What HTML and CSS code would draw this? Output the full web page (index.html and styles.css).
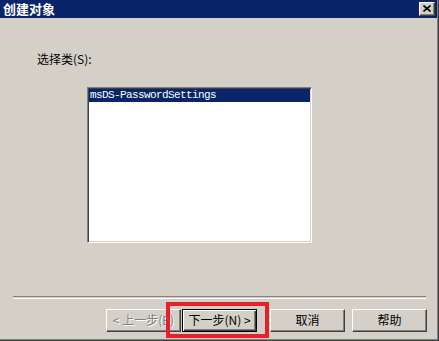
FILE: index.html
```html
<!DOCTYPE html>
<html lang="zh">
<head>
    <meta charset="UTF-8">
    <title>创建对象</title>
    <link rel="stylesheet" href="styles.css">
</head>
<body>
    <div class="frame">
        <div class="window">
            <!--标题栏-->
            <div class="title-bar">
                <span class="title-text">创建对象</span>
                <span class="close-btn">
                    <svg width="8" height="7" viewBox="0 0 8 7">
                        <path d="M0.5 0.5 L7.5 6.5 M7.5 0.5 L0.5 6.5" stroke="#000" stroke-width="1.6" fill="none"/>
                    </svg>
                </span>
            </div>

            <div class="content">
                <div class="label">选择类(S):</div>
                <div class="listbox">
                    <div class="list-item selected">msDS-PasswordSettings</div>
                </div>
            </div>

            <div class="separator"></div>

            <!--底部按钮-->
            <div class="buttons">
                <div class="btn disabled btn-back">&lt; 上一步(B)</div>
                <div class="btn default btn-next">下一步(N) &gt;</div>
                <div class="btn btn-cancel">取消</div>
                <div class="btn btn-help">帮助</div>
            </div>

            <div class="highlight"></div>
        </div>
    </div>
</body>
</html>
```

FILE: styles.css
```css
body {
    margin: 0;
    background: #d4d0c8;
    font-family: "Noto Sans CJK SC", "Liberation Sans", sans-serif;
    font-size: 12px;
    color: #000;
}

.frame {
    box-sizing: border-box;
    width: 439px;
    height: 341px;
    border-right: 1px solid #404040;
    border-bottom: 1px solid #404040;
}

.window {
    box-sizing: border-box;
    position: relative; /*红框相对于窗口定位*/
    width: 438px;
    height: 340px;
    border-right: 1px solid #808080;
    border-bottom: 1px solid #808080;
    background: #d4d0c8;
}

/*-----------------------*/
.title-bar {
    width: 437px;
    height: 18px;
    background: #0a246a;
    display: flex;
    align-items: center;
    justify-content: space-between;
    box-sizing: border-box;
    padding: 0 2px 0 3px;
}

.title-text {
    color: #fff;
    font-weight: bold;
    font-size: 13px;
    line-height: 14px;
}

.close-btn {
    box-sizing: border-box;
    width: 16px;
    height: 14px;
    background: #d4d0c8;
    border-top: 1px solid #fff;
    border-left: 1px solid #fff;
    border-right: 1px solid #404040;
    border-bottom: 1px solid #404040;
    box-shadow: inset -1px -1px 0 #808080;
    display: flex;
    align-items: center;
    justify-content: center;
}

.close-btn svg {
    display: block;
    margin: 0 1px 1px 0;
}

/*-----------------------*/
.content {
    padding-top: 34px;
}

.label {
    padding-left: 37px;
    line-height: 14px;
}

.listbox {
    box-sizing: border-box;
    margin: 21px 0 0 87px;
    width: 225px;
    height: 156px;
    background: #fff;
    border-top: 1px solid #808080;
    border-left: 1px solid #808080;
    border-right: 1px solid #fff;
    border-bottom: 1px solid #fff;
    box-shadow: inset 1px 1px 0 #404040, inset -1px -1px 0 #d4d0c8;
    padding: 1px;
}

.list-item {
    height: 13px;
    line-height: 13px;
    padding-left: 1px;
    font-family: "Liberation Mono", monospace;
    font-size: 11px;
    letter-spacing: -0.6px;
}

.list-item.selected {
    background: #0a246a;
    color: #fff;
}

/*-----------------------*/
.separator {
    margin: 53px 0 0 13px;
    width: 413px;
    height: 1px;
    border-top: 1px solid #808080;
    border-bottom: 1px solid #fff;
}

.buttons {
    display: flex;
    margin: 10px 0 0 106px;
}

.btn {
    box-sizing: border-box;
    width: 75px;
    height: 23px;
    line-height: 19px;
    text-align: center;
    border-top: 1px solid #fff;
    border-left: 1px solid #fff;
    border-right: 1px solid #404040;
    border-bottom: 1px solid #404040;
    box-shadow: inset -1px -1px 0 #808080;
}

.btn.disabled {
    color: #808080;
    text-shadow: 1px 1px 0 #fff;
}

.btn.default {
    border: 1px solid #000;
    box-shadow: inset 1px 1px 0 #fff, inset -1px -1px 0 #404040, inset -2px -2px 0 #808080;
}

.btn-next {
    margin-left: 1px;
}

.btn-cancel {
    margin-left: 13px;
}

.btn-help {
    margin-left: 7px;
}

/*红色标注框*/
.highlight {
    position: absolute;
    left: 166px;
    top: 302px;
    width: 103px;
    height: 36px;
    box-sizing: border-box;
    border: 4px solid #e8202a;
}
```
